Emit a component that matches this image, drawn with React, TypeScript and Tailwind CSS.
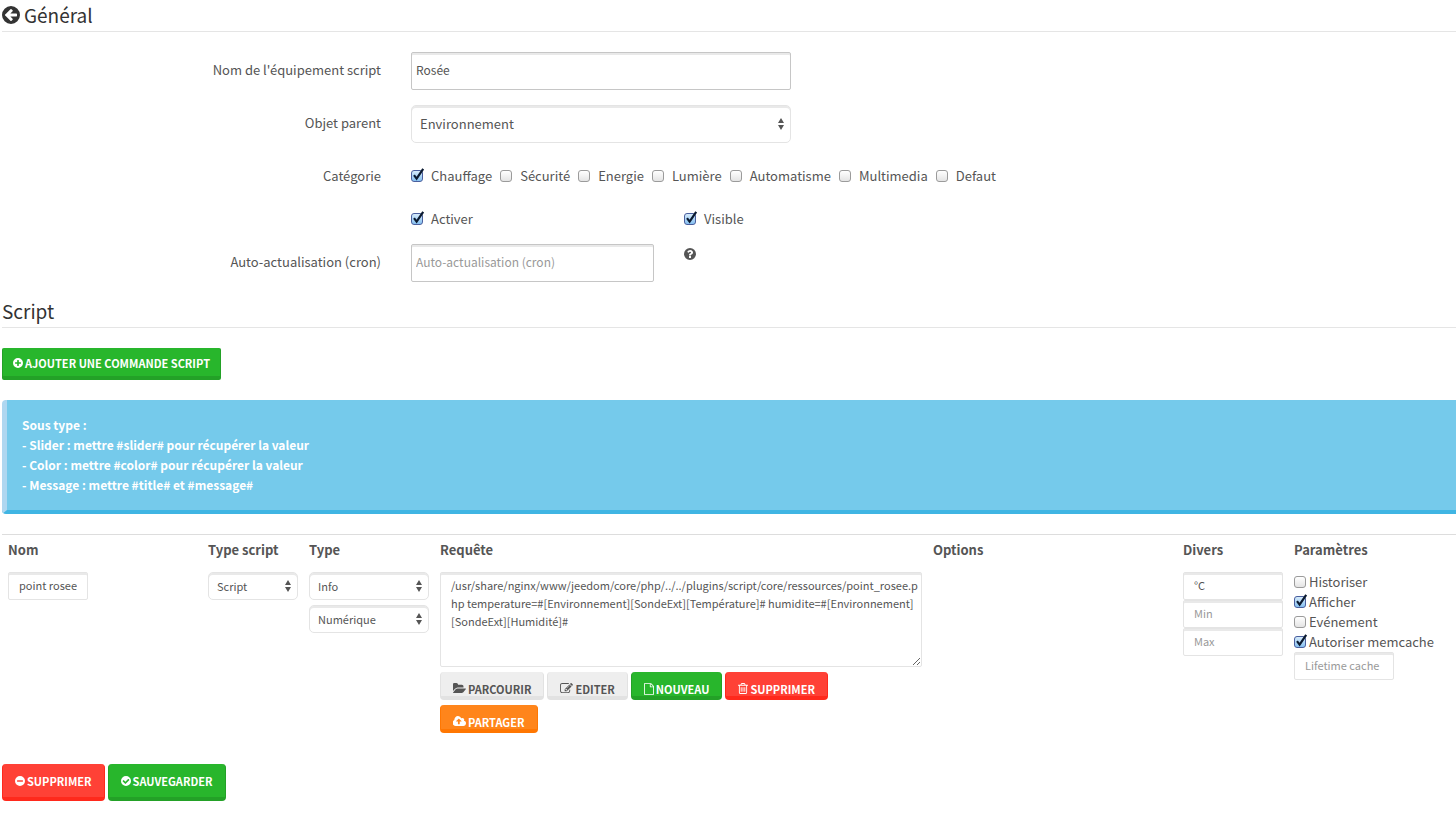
import React, { useState } from 'react';

const DISC = 'M0 768a768 768 0 1 1 1536 0a768 768 0 1 1-1536 0z';

const icons = {
  arrowLeft: {
    box: '0 0 1536 1536',
    d: DISC + 'M1280 832v-128q0-26-19-45t-45-19h-502l189-189q19-19 19-45t-19-45l-91-91q-18-18-45-18t-45 18l-362 362-91 91q-18 18-18 45t18 45l91 91 362 362q18 18 45 18t45-18l91-91q18-18 18-45t-18-45l-189-189h502q26 0 45-19t19-45z',
  },
  plus: {
    box: '0 0 1536 1536',
    d: DISC + 'M1216 832v-128q0-26-19-45t-45-19h-256v-256q0-26-19-45t-45-19h-128q-26 0-45 19t-19 45v256h-256q-26 0-45 19t-19 45v128q0 26 19 45t45 19h256v256q0 26 19 45t45 19h128q26 0 45-19t19-45v-256h256q26 0 45-19t19-45z',
  },
  minus: {
    box: '0 0 1536 1536',
    d: DISC + 'M1216 832v-128q0-26-19-45t-45-19h-768q-26 0-45 19t-19 45v128q0 26 19 45t45 19h768q26 0 45-19t19-45z',
  },
  check: {
    box: '0 0 1536 1536',
    d: DISC + 'M1284 606q0-28-18-46l-91-90q-19-19-45-19t-45 19l-408 407-226-226q-19-19-45-19t-45 19l-91 90q-18 18-18 46 0 27 18 45l362 362q19 19 45 19 27 0 46-19l543-543q18-18 18-45z',
  },
  question: {
    box: '0 0 1536 1536',
    d: DISC + 'M896 1248v-192q0-14-9-23t-23-9h-192q-14 0-23 9t-9 23v192q0 14 9 23t23 9h192q14 0 23-9t9-23zm256-672q0-88-55.5-163t-138.5-116-170-41q-243 0-371 213-15 24 8 42l132 100q7 6 19 6 16 0 25-12 53-68 86-92 34-24 86-24 48 0 85.5 26t37.5 59q0 38-20 61t-68 45q-63 28-115.5 86.5t-52.5 125.5v36q0 14 9 23t23 9h192q14 0 23-9t9-23q0-19 21.5-49.5t54.5-49.5q32-18 49-28.5t46-35 44.5-48 28-60.5 12.5-81z',
  },
  folder: {
    box: '0 128 1824 1536',
    d: 'M1815 952q0 31-31 66l-336 396q-43 51-120.5 86.5t-143.5 35.5h-1088q-34 0-60.5-13t-26.5-43q0-31 31-66l336-396q43-51 120.5-86.5t143.5-35.5h1088q34 0 60.5 13t26.5 43zm-343-344v160h-832q-94 0-197 47.5t-164 119.5l-337 396-5 6q0-4-.5-12.5t-.5-12.5v-960q0-92 66-158t158-66h320q92 0 158 66t66 158v32h544q92 0 158 66t66 158z',
  },
  edit: {
    box: '0 128 1792 1536',
    d: 'M888 1184l116-116-152-152-116 116v56h96v96h56zm440-720q-16-16-33 1l-350 350q-17 17-1 33t33-1l350-350q17-17 1-33zm80 594v190q0 119-84.5 203.5t-203.5 84.5h-832q-119 0-203.5-84.5t-84.5-203.5v-832q0-119 84.5-203.5t203.5-84.5h832q63 0 117 25 15 7 18 23 3 17-9 29l-49 49q-14 14-32 8-23-6-45-6h-832q-66 0-113 47t-47 113v832q0 66 47 113t113 47h832q66 0 113-47t47-113v-126q0-13 9-22l64-64q15-15 35-7t20 29zm-96-738l288 288-672 672h-288v-288zm444 132l-92 92-288-288 92-92q28-28 68-28t68 28l152 152q28 28 28 68t-28 68z',
  },
  file: {
    box: '0 0 1536 1792',
    d: 'M1468 380q28 28 48 76t20 88v1152q0 40-28 68t-68 28h-1344q-40 0-68-28t-28-68v-1600q0-40 28-68t68-28h896q40 0 88 20t76 48zm-444-244v376h376q-10-29-22-41l-313-313q-12-12-41-22zm384 1528v-1024h-416q-40 0-68-28t-28-68v-416h-768v1536h1280z',
  },
  trash: {
    box: '0 128 1408 1536',
    d: 'M512 736v576q0 14-9 23t-23 9h-64q-14 0-23-9t-9-23v-576q0-14 9-23t23-9h64q14 0 23 9t9 23zm256 0v576q0 14-9 23t-23 9h-64q-14 0-23-9t-9-23v-576q0-14 9-23t23-9h64q14 0 23 9t9 23zm256 0v576q0 14-9 23t-23 9h-64q-14 0-23-9t-9-23v-576q0-14 9-23t23-9h64q14 0 23 9t9 23zm128 724v-948h-896v948q0 22 7 40.5t14.5 27 10.5 8.5h832q3 0 10.5-8.5t14.5-27 7-40.5zm-672-1076h448l-48-117q-7-9-17-11h-317q-10 2-17 11zm928 32v64q0 14-9 23t-23 9h-96v948q0 83-47 143.5t-113 60.5h-832q-66 0-113-58.5t-47-141.5v-952h-96q-14 0-23-9t-9-23v-64q0-14 9-23t23-9h309l70-167q15-37 54-63t79-26h320q40 0 79 26t54 63l70 167h309q14 0 23 9t9 23z',
  },
  cloud: {
    box: '0 128 1856 1536',
    d: 'M1216 864q0-14-9-23l-352-352q-9-9-23-9t-23 9l-351 351q-10 12-10 24 0 14 9 23t23 9h224v352q0 13 9.5 22.5t22.5 9.5h192q13 0 22.5-9.5t9.5-22.5v-352h224q13 0 22.5-9.5t9.5-22.5zm640 288q0 159-112.5 271.5t-271.5 112.5h-1088q-185 0-316.5-131.5t-131.5-316.5q0-130 70-240t188-165q-2-30-2-43 0-212 150-362t362-150q156 0 285.5 87t188.5 231q71-62 166-62 106 0 181 75t75 181q0 76-41 138 130 31 213.5 135.5t83.5 238.5z',
  },
};

const Icon = ({ name, className }: { name: keyof typeof icons; className: string }) => (
  <svg viewBox={icons[name].box} className={`shrink-0 ${className}`} fill="currentColor" fillRule="evenodd" aria-hidden="true">
    <path d={icons[name].d} />
  </svg>
);

const buttonColors = {
  green: 'bg-[#28b62c] border-[#23a127] text-white',
  red: 'bg-[#ff4136] border-[#ff291c] text-white',
  orange: 'bg-[#ff851b] border-[#ff7702] text-white',
  gray: 'bg-[#eeeeee] border-[#e2e2e2] text-[#555555]',
};

const buttonSizes = {
  xs: 'h-7 px-3 pt-[10px] rounded-[4px]',
  sm: 'h-8 px-[10px] pt-[2px] rounded-[2px]',
  md: 'h-[37px] px-3 pt-[2px] rounded-[4px]',
};

interface ButtonProps {
  color: keyof typeof buttonColors;
  size: keyof typeof buttonSizes;
  children: React.ReactNode;
}

const Button = ({ color, size, children }: ButtonProps) => (
  <button
    type="button"
    className={`inline-flex items-center gap-[2px] border border-t-0 border-b-4 text-[11px] leading-4 font-bold uppercase whitespace-nowrap ${buttonColors[color]} ${buttonSizes[size]}`}
  >
    {children}
  </button>
);

interface CheckProps {
  label: string;
  defaultChecked?: boolean;
  className?: string;
}

const Check = ({ label, defaultChecked = false, className = 'gap-2' }: CheckProps) => {
  const [checked, setChecked] = useState(defaultChecked);
  return (
    <label className={`flex items-center leading-5 whitespace-nowrap ${className}`}>
      <span className="relative h-3 w-3 shrink-0">
        <input
          type="checkbox"
          checked={checked}
          onChange={(e) => setChecked(e.target.checked)}
          className="block h-3 w-3 appearance-none rounded-[3px] border border-[#9b9b9b] bg-gradient-to-b from-white to-[#e4e4e4] checked:border-[#4a5f9e] checked:from-[#d6ebfb] checked:to-[#86c0f0]"
        />
        {checked && (
          <svg viewBox="0 0 14 14" className="pointer-events-none absolute -top-[2px] left-0 h-[14px] w-[14px]" fill="none" stroke="#0b1a30" strokeWidth="2.2">
            <path d="M3 7.2L5.6 10.6L12.2 0.8" />
          </svg>
        )}
      </span>
      {label}
    </label>
  );
};

interface PickerProps {
  id?: string;
  label?: string;
  options: string[];
  className: string;
}

const Picker = ({ id, label, options, className }: PickerProps) => (
  <div className="relative">
    <select
      id={id}
      aria-label={label}
      className={`block w-full appearance-none rounded-[5px] border border-[#e4e4e4] bg-white px-2 shadow-[inset_0_2px_0_#e9e9e9] ${className}`}
    >
      {options.map((option) => (
        <option key={option}>{option}</option>
      ))}
    </select>
    <svg viewBox="0 0 6 12" className="pointer-events-none absolute top-1/2 right-[7px] -mt-[6px] h-3 w-[6px]" fill="#555555">
      <path d="M3 0L6 5H0zM3 12L0 7H6z" />
    </svg>
  </div>
);

const SmallInput = (props: React.InputHTMLAttributes<HTMLInputElement>) => (
  <input
    type="text"
    {...props}
    className={`block h-7 rounded-[2px] border border-[#e4e4e4] bg-white px-[10px] pb-[2px] text-[11px] shadow-[inset_0_2px_0_#e9e9e9] placeholder:text-[#999999] ${props.className}`}
  />
);

const bigInput =
  'block h-[38px] w-full rounded-[2px] border border-[#c6c6c6] bg-white px-1 pb-1 text-xs shadow-[inset_0_2px_0_#e9e9e9] placeholder:text-[#999999]';

const fieldLabel = 'pr-[15px] pb-[2px] text-right';

const heading = 'flex h-8 items-center gap-1 border-b border-[#e5e5e5] pb-px text-[19px] leading-6 text-[#333333]';

const categories = ['Chauffage', 'Sécurité', 'Energie', 'Lumière', 'Automatisme', 'Multimedia', 'Defaut'];

const request =
  '/usr/share/nginx/www/jeedom/core/php/../../plugins/script/core/ressources/point_rosee.php temperature=#[Environnement][SondeExt][Température]# humidite=#[Environnement][SondeExt][Humidité]#';

const GeneralForm = () => (
  <form className="mt-5">
    <div className="grid grid-cols-[394fr_410fr_650fr] items-center">
      <label htmlFor="name" className={fieldLabel}>Nom de l'équipement script</label>
      <div className="px-[15px]">
        <input id="name" type="text" defaultValue="Rosée" className={bigInput} />
      </div>
    </div>
    <div className="mt-[15px] grid grid-cols-[394fr_410fr_650fr] items-center">
      <label htmlFor="parent" className={fieldLabel}>Objet parent</label>
      <div className="px-[15px]">
        <Picker id="parent" options={['Environnement']} className="h-[38px]" />
      </div>
    </div>
    <div className="mt-[15px] grid h-9 grid-cols-[394fr_1060fr] items-center" role="group" aria-labelledby="category">
      <span id="category" className="pr-[15px] text-right">Catégorie</span>
      <div className="flex gap-2 pl-[15px]">
        {categories.map((category) => (
          <Check key={category} label={category} defaultChecked={category === 'Chauffage'} />
        ))}
      </div>
    </div>
    <div className="mt-[7px] grid h-9 grid-cols-[394fr_273fr_787fr] items-center">
      <span />
      <div className="pl-[15px]"><Check label="Activer" defaultChecked /></div>
      <div className="pl-[15px]"><Check label="Visible" defaultChecked /></div>
    </div>
    <div className="mt-[7px] grid grid-cols-[394fr_273fr_787fr] items-center">
      <label htmlFor="cron" className={fieldLabel}>Auto-actualisation (cron)</label>
      <div className="px-[15px]">
        <input id="cron" type="text" placeholder="Auto-actualisation (cron)" className={bigInput} />
      </div>
      <div className="self-start pt-1 pl-[15px]">
        <Icon name="question" className="h-3 w-3" />
      </div>
    </div>
  </form>
);

const CommandTable = () => (
  <table className="mt-5 w-full table-fixed border-t border-[#dddddd]">
    <colgroup>
      <col className="w-[200px]" />
      <col className="w-[101px]" />
      <col className="w-[131px]" />
      <col />
      <col className="w-[250px]" />
      <col className="w-[111px]" />
      <col className="w-[168px]" />
    </colgroup>
    <thead>
      <tr className="h-[31px] text-left [&>th]:px-[6px] [&>th]:font-bold">
        <th>Nom</th>
        <th>Type script</th>
        <th>Type</th>
        <th>Requête</th>
        <th>Options</th>
        <th>Divers</th>
        <th>Paramètres</th>
      </tr>
    </thead>
    <tbody>
      <tr className="align-top [&>td]:py-[6px] [&>td]:pr-[5px] [&>td]:pl-[6px]">
        <td><SmallInput aria-label="Nom" defaultValue="point rosee" className="w-20" /></td>
        <td><Picker label="Type script" options={['Script']} className="h-7 text-[11px]" /></td>
        <td>
          <div className="flex flex-col gap-[5px]">
            <Picker label="Type" options={['Info']} className="h-7 text-[11px]" />
            <Picker label="Sous type" options={['Numérique']} className="h-7 text-[11px]" />
          </div>
        </td>
        <td>
          <textarea
            aria-label="Requête"
            defaultValue={request}
            className="block h-[95px] w-full rounded-[2px] border border-[#e4e4e4] bg-white py-[3px] pl-[10px] text-[11px] leading-[18px] break-all shadow-[inset_0_2px_0_#e9e9e9]"
          />
          <div className="mt-[5px] flex max-w-[400px] flex-wrap gap-x-[3px] gap-y-[5px]">
            <Button color="gray" size="xs"><Icon name="folder" className="h-[11px] w-[13px]" /> Parcourir</Button>
            <Button color="gray" size="xs"><Icon name="edit" className="h-[11px] w-[13px]" /> Editer</Button>
            <Button color="green" size="xs"><Icon name="file" className="h-3 w-[10px]" /> Nouveau</Button>
            <Button color="red" size="xs"><Icon name="trash" className="h-[11px] w-[10px]" /> Supprimer</Button>
            <Button color="orange" size="xs"><Icon name="cloud" className="h-[11px] w-[13px]" /> Partager</Button>
          </div>
        </td>
        <td />
        <td>
          <SmallInput aria-label="Unité" defaultValue="°C" className="w-full" />
          <SmallInput aria-label="Min" placeholder="Min" className="w-full" />
          <SmallInput aria-label="Max" placeholder="Max" className="w-full" />
        </td>
        <td>
          <Check label="Historiser" className="gap-[3px]" />
          <Check label="Afficher" defaultChecked className="gap-[3px]" />
          <Check label="Evénement" className="gap-[3px]" />
          <Check label="Autoriser memcache" defaultChecked className="gap-[3px]" />
          <SmallInput aria-label="Lifetime cache" placeholder="Lifetime cache" className="w-[100px]" />
        </td>
      </tr>
    </tbody>
  </table>
);

const App: React.FC = () => {
  return (
    <main className="min-h-screen bg-white pl-[2px] font-['Noto_Sans_CJK_SC',sans-serif] text-[13px] leading-5 text-[#555555]">
      <h1 className={heading}>
        <Icon name="arrowLeft" className="h-[18px] w-[18px]" /> Général
      </h1>
      <GeneralForm />

      <h2 className={`mt-[14px] ${heading}`}>Script</h2>
      <div className="mt-5 flex">
        <Button color="green" size="sm"><Icon name="plus" className="h-[10px] w-[10px]" /> Ajouter une commande script</Button>
      </div>

      <div className="mt-5 rounded-l-[4px] border-b-4 border-l-[5px] border-b-[#40b5e3] border-l-[#afd7f0] bg-[#75caeb] p-[15px] text-xs leading-5 font-bold text-white">
        Sous type :<br />
        - Slider : mettre #slider# pour récupérer la valeur<br />
        - Color : mettre #color# pour récupérer la valeur<br />
        - Message : mettre #title# et #message#
      </div>

      <CommandTable />

      <div className="mt-[25px] flex gap-[3px]">
        <Button color="red" size="md"><Icon name="minus" className="h-[10px] w-[10px]" /> Supprimer</Button>
        <Button color="green" size="md"><Icon name="check" className="h-[10px] w-[10px]" /> Sauvegarder</Button>
      </div>
    </main>
  );
};

export default App;
